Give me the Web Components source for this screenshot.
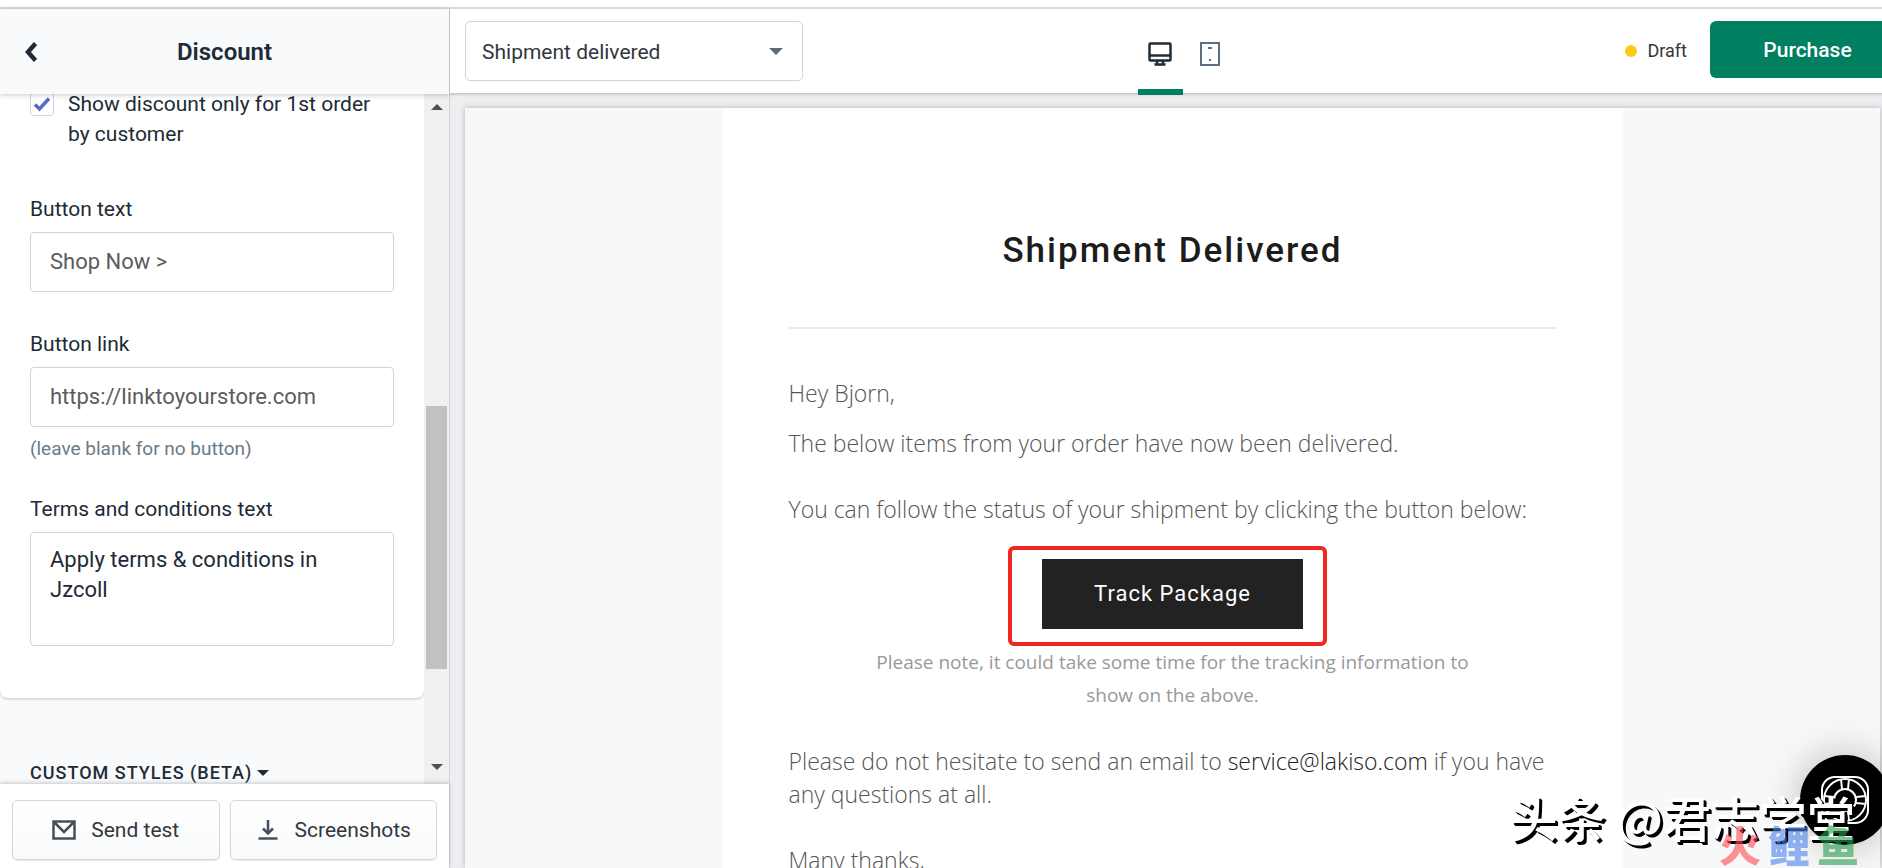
<!DOCTYPE html>
<html lang="en">
<head>
<meta charset="utf-8">
<meta name="viewport" content="width=device-width, initial-scale=1">
<title>Discount</title>
<style>
    body {
        margin: 0;
        font-family: Roboto, "Noto Sans", sans-serif;
        font-size: 21px;
        line-height: 30px;
        color: #212b36;
        background-color: #ffffff;
        overflow: hidden;
    }
</style>
</head>
<body>

<email-editor>
    <side-panel slot="side" heading="Discount">
        <check-field checked>Show discount only for 1st order by customer</check-field>
        <text-field label="Button text" value="Shop Now &gt;"></text-field>
        <text-field label="Button link" value="https://linktoyourstore.com" help="(leave blank for no button)"></text-field>
        <text-field label="Terms and conditions text" value="Apply terms &amp; conditions in Jzcoll" multiline></text-field>
        <section-toggle slot="after">CUSTOM STYLES (BETA)</section-toggle>
        <action-button slot="actions" icon="mail">Send test</action-button>
        <action-button slot="actions" icon="download">Screenshots</action-button>
    </side-panel>
    <tool-bar slot="bar" template="Shipment delivered" status="Draft">Purchase</tool-bar>
    <email-preview slot="preview" heading="Shipment Delivered">
        <p>Hey Bjorn,</p>
        <p>The below items from your order have now been delivered.</p>
        <track-button slot="action">Track Package</track-button>
    </email-preview>
</email-editor>

<chat-launcher></chat-launcher>
<page-watermark></page-watermark>

<script>
'use strict';

class EmailEditor extends HTMLElement {

    constructor() {
        super();
        this._root = this.attachShadow({ mode: 'open' });
        this._root.innerHTML = `
            <style>
                :host {
                    display: flex;
                    flex-direction: column;
                    height: 100vh;
                }

                .strip {
                    flex: none;
                    height: 7px;
                    border-bottom: 2px solid #d9dadd;
                }

                .columns {
                    flex: 1;
                    min-height: 0;
                    display: grid;
                    grid-template-columns: 449px minmax(0, 1fr);
                }

                main {
                    display: flex;
                    flex-direction: column;
                    min-width: 0;
                    min-height: 0;
                    border-left: 1px solid #d3d5d8;
                    background-color: #eeeef1;
                    overflow: hidden;
                }
            </style>
            <div class="strip"></div>
            <div class="columns">
                <slot name="side"></slot>
                <main>
                    <slot name="bar"></slot>
                    <slot name="preview"></slot>
                </main>
            </div>`;
    }
}

customElements.define('email-editor', EmailEditor);


class SidePanel extends HTMLElement {

    constructor() {
        super();
        this._root = this.attachShadow({ mode: 'open' });
        this._root.innerHTML = `
            <style>
                ${ this._css() }
            </style>
            <header>
                <button class="back" aria-label="Back">
                    <svg width="14" height="22" viewBox="0 0 14 22"><path d="M11.500 2.500 4 11l7.500 8.500" fill="none" stroke="#212b36" stroke-width="4.500"/></svg>
                </button>
                <h1></h1>
            </header>
            <div class="body">
                <div class="scroller">
                    <div class="card"><slot></slot></div>
                    <slot name="after"></slot>
                </div>
                <div class="bar" aria-hidden="true">
                    <svg width="12" height="6" viewBox="0 0 12 6"><path d="M0 6 6 0l6 6z" fill="#505050"/></svg>
                    <div class="thumb"></div>
                    <svg class="down" width="12" height="6" viewBox="0 0 12 6"><path d="M0 0l6 6 6-6z" fill="#505050"/></svg>
                </div>
            </div>
            <footer><slot name="actions"></slot></footer>`;

        this._root.querySelector('h1').textContent = this.getAttribute('heading');
        this._scroller = this._root.querySelector('.scroller');
    }

    connectedCallback() {
        requestAnimationFrame(() => this._scroller.scrollTop = 37);
    }

    _css() {
        return `
            :host {
                display: flex;
                flex-direction: column;
                min-height: 0;
                background-color: #f9fafb;
            }

            header {
                position: relative;
                z-index: 1;
                flex: none;
                display: grid;
                grid-template-columns: 1fr auto 1fr;
                align-items: center;
                height: 85px;
                background-color: #f9fafc;
                box-shadow: 0 1px 5px rgba(33, 43, 54, 0.25);
            }

            h1 {
                margin: 0;
                font-size: 24px;
                font-weight: 600;
            }

            .back {
                justify-self: start;
                display: flex;
                margin: 0 24px;
                padding: 0;
                border: none;
                background: none;
            }

            .body {
                flex: 1;
                min-height: 0;
                display: flex;
            }

            .scroller {
                flex: 1;
                min-width: 0;
                overflow-y: auto;
                scrollbar-width: none;
            }

            .card {
                display: flex;
                flex-direction: column;
                gap: 37px;
                padding: 32px 30px 52px;
                border-radius: 0 0 8px 8px;
                background-color: #ffffff;
                box-shadow: 0 1px 3px rgba(33, 43, 54, 0.25);
            }

            .bar {
                flex: none;
                display: grid;
                grid-template-rows: 25px 287fr 263fr 85fr 25px;
                justify-items: center;
                align-items: center;
                width: 25px;
                padding-bottom: 5px;
                background-color: #f0f0f0;
            }

            .thumb {
                grid-row: 3;
                align-self: stretch;
                width: 21px;
                background-color: #c1c1c1;
            }

            .down {
                grid-row: 5;
            }

            footer {
                position: relative;
                flex: none;
                display: grid;
                grid-template-columns: 1fr 1fr;
                gap: 10px;
                padding: 16px 12px 8px;
                background-color: #ffffff;
                box-shadow: 0 -1px 4px rgba(33, 43, 54, 0.25);
            }
        `;
    }
}

customElements.define('side-panel', SidePanel);


class CheckField extends HTMLElement {

    constructor() {
        super();
        this._root = this.attachShadow({ mode: 'open' });
        this._root.innerHTML = `
            <style>
                :host {
                    display: block;
                    margin-bottom: 8px;
                }

                label {
                    display: flex;
                    gap: 14px;
                }

                .box {
                    flex: none;
                    display: grid;
                    width: 24px;
                    height: 24px;
                    margin-top: 3px;
                }

                input, svg {
                    grid-area: 1 / 1;
                    place-self: center;
                }

                input {
                    appearance: none;
                    width: 24px;
                    height: 24px;
                    margin: 0;
                    border: 1px solid #cfd3da;
                    border-radius: 4px;
                    background-color: #ffffff;
                }

                svg {
                    display: none;
                    pointer-events: none;
                }

                input:checked + svg {
                    display: block;
                }
            </style>
            <label>
                <span class="box">
                    <input type="checkbox">
                    <svg width="18" height="16" viewBox="0 0 18 16"><path d="M2 8.500 6.500 13 16 2.500" fill="none" stroke="#5c6ac4" stroke-width="3.500"/></svg>
                </span>
                <span><slot></slot></span>
            </label>`;
        this._root.querySelector('input').checked = this.hasAttribute('checked');
    }
}

customElements.define('check-field', CheckField);


class TextField extends HTMLElement {

    constructor() {
        super();
        this._root = this.attachShadow({ mode: 'open' });

        let multiline = this.hasAttribute('multiline');

        this._root.innerHTML = `
            <style>
                ${ this._css() }
            </style>
            <label for="control"></label>
            ${ multiline ? '<textarea id="control"></textarea>' : '<input id="control" type="text">' }
            ${ this.hasAttribute('help') ? '<div class="help"></div>' : '' }`;

        this._root.querySelector('label').textContent = this.getAttribute('label');
        this._root.querySelector('#control').value = this.getAttribute('value');
        if (this.hasAttribute('help'))
            this._root.querySelector('.help').textContent = this.getAttribute('help');
    }

    _css() {
        return `
            :host {
                display: block;
            }

            label {
                display: block;
                margin-bottom: 8px;
            }

            input, textarea {
                display: block;
                box-sizing: border-box;
                width: 100%;
                margin: 0;
                border: 1px solid #d1d3d6;
                border-radius: 4px;
                background-color: #ffffff;
                font-family: inherit;
                font-size: 22px;
                line-height: 30px;
            }

            input {
                height: 60px;
                padding: 0 19px 2px;
                color: #5c5c5c;
            }

            textarea {
                height: 114px;
                padding: 12px 19px;
                color: #212b36;
                resize: none;
            }

            .help {
                margin-top: 14px;
                font-size: 19px;
                line-height: 16px;
                color: #6b7a87;
            }
        `;
    }
}

customElements.define('text-field', TextField);


class SectionToggle extends HTMLElement {

    constructor() {
        super();
        this._root = this.attachShadow({ mode: 'open' });
        this._root.innerHTML = `
            <style>
                :host {
                    display: block;
                    padding: 60px 30px;
                }

                button {
                    display: flex;
                    align-items: center;
                    gap: 5px;
                    padding: 0;
                    border: none;
                    background: none;
                    font-family: inherit;
                    font-size: 18px;
                    font-weight: 500;
                    line-height: 30px;
                    letter-spacing: 1px;
                    color: #212b36;
                }
            </style>
            <button><slot></slot><svg width="12" height="6" viewBox="0 0 12 6"><path d="M0 0h12L6 6z" fill="#212b36"/></svg></button>`;
    }
}

customElements.define('section-toggle', SectionToggle);


class ActionButton extends HTMLElement {

    constructor() {
        super();
        this._root = this.attachShadow({ mode: 'open' });

        let icons = {
            mail: '<path d="M1.500 3.500h21v17h-21z"/><path d="M2 4l10 10L22 4"/>',
            download: '<path d="M12 2v13"/><path d="M7 10.500l5 5 5-5"/><path d="M2.500 20.500h19"/>'
        };

        this._root.innerHTML = `
            <style>
                :host {
                    display: block;
                }

                button {
                    display: flex;
                    align-items: center;
                    justify-content: center;
                    gap: 15px;
                    width: 100%;
                    height: 60px;
                    padding: 0;
                    border: 1px solid #d3d6da;
                    border-radius: 5px;
                    background: linear-gradient(#ffffff, #f9fafb);
                    box-shadow: 0 1px 1px rgba(33, 43, 54, 0.08);
                    font-family: inherit;
                    font-size: 21px;
                    color: #31373d;
                }

                svg {
                    fill: none;
                    stroke: #454f5b;
                    stroke-width: 2.5;
                }
            </style>
            <button><svg width="24" height="24" viewBox="0 0 24 24">${ icons[this.getAttribute('icon')] }</svg><slot></slot></button>`;
    }
}

customElements.define('action-button', ActionButton);


class ToolBar extends HTMLElement {

    constructor() {
        super();
        this._root = this.attachShadow({ mode: 'open' });
        this._root.innerHTML = `
            <style>
                ${ this._css() }
            </style>
            <div class="select">
                <select aria-label="Email template"><option></option></select>
                <svg width="14" height="7" viewBox="0 0 14 7"><path d="M0 0h14L7 7z" fill="#5b6b7b"/></svg>
            </div>
            <div class="devices">
                <button class="active" aria-label="Desktop">
                    <svg width="24" height="24" viewBox="0 0 24 24" fill="none" stroke="#212b36" stroke-width="2.500"><rect x="1.500" y="1.500" width="21" height="17" rx="1"/><path d="M2 13.500h20M9 19v4M15 19v4M6.500 22.500h11"/></svg>
                </button>
                <button aria-label="Mobile">
                    <svg width="24" height="24" viewBox="0 0 24 24" fill="none" stroke="#5f6f80" stroke-width="2"><rect x="3" y="1" width="18" height="22"/><path d="M10 6h4M11 18h2"/></svg>
                </button>
            </div>
            <div class="end">
                <span class="status"></span>
                <button class="purchase"><slot></slot></button>
            </div>`;
        this._root.querySelector('option').textContent = this.getAttribute('template');
        this._root.querySelector('.status').textContent = this.getAttribute('status');
    }

    _css() {
        return `
            :host {
                position: relative;
                z-index: 1;
                flex: none;
                box-sizing: border-box;
                display: grid;
                grid-template-columns: 1fr auto 1fr;
                align-items: start;
                width: calc(100% + 38px);
                height: 84px;
                padding: 12px 15px 0;
                background-color: #ffffff;
                box-shadow: 0 1px 3px rgba(33, 43, 54, 0.3);
            }

            .select {
                display: grid;
                align-items: center;
                width: 338px;
            }

            select, .select svg {
                grid-area: 1 / 1;
            }

            .select svg {
                justify-self: end;
                margin-right: 20px;
                pointer-events: none;
            }

            select {
                appearance: none;
                width: 100%;
                height: 60px;
                padding: 2px 16px 0;
                border: 1px solid #d1d3d6;
                border-radius: 5px;
                background-color: #ffffff;
                font-family: inherit;
                font-size: 21px;
                color: #31373d;
            }

            .devices {
                display: flex;
                gap: 5px;
            }

            .devices button {
                display: flex;
                justify-content: center;
                width: 45px;
                height: 74px;
                padding: 21px 0 0;
                border: none;
                border-bottom: 6px solid transparent;
                background: none;
            }

            .devices .active {
                border-bottom-color: #008060;
            }

            .end {
                display: flex;
                justify-content: flex-end;
                align-items: center;
                gap: 23px;
            }

            .status {
                display: flex;
                align-items: center;
                gap: 11px;
                padding-top: 2px;
                font-size: 18px;
                color: #31373d;
            }

            .status::before {
                content: '';
                width: 12px;
                height: 12px;
                border-radius: 50%;
                background-color: #fccb14;
            }

            .purchase {
                width: 195px;
                height: 57px;
                border: none;
                border-radius: 6px;
                background-color: #008060;
                font-family: inherit;
                font-size: 21px;
                font-weight: 500;
                color: #ffffff;
            }
        `;
    }
}

customElements.define('tool-bar', ToolBar);


class EmailPreview extends HTMLElement {

    constructor() {
        super();
        this._root = this.attachShadow({ mode: 'open' });
        this._root.innerHTML = `
            <style>
                ${ this._css() }
            </style>
            <article>
                <h2></h2>
                <hr>
                <slot></slot>
                <p class="lead">You can follow the status of your shipment by clicking the button below:</p>
                <slot name="action"></slot>
                <p class="note">Please note, it could take some time for the tracking information to show on the above.</p>
                <p class="lead">Please do not hesitate to send an email to <a href="mailto:service@lakiso.com">service@lakiso.com</a> if you have any questions at all.</p>
                <p class="lead">Many thanks,</p>
            </article>`;
        this._root.querySelector('h2').textContent = this.getAttribute('heading');
    }

    _css() {
        return `
            :host {
                flex: 1;
                min-height: 0;
                display: block;
                margin: 15px 2px 0 15px;
                background-color: #f8f8f8;
                box-shadow: 0 0 5px rgba(33, 43, 54, 0.3);
                overflow: hidden;
                font-family: "Open Sans", "Noto Sans", sans-serif;
                font-size: 23px;
                font-weight: 300;
                line-height: 33px;
                color: #555555;
            }

            article {
                box-sizing: border-box;
                max-width: 900px;
                min-height: 100%;
                margin: 0 auto;
                padding: 122px 66px 33px;
                background-color: #ffffff;
            }

            h2 {
                margin: 0;
                font-family: Roboto, sans-serif;
                font-size: 35px;
                font-weight: 500;
                line-height: 42px;
                letter-spacing: 2px;
                text-align: center;
                color: #1c1c1c;
            }

            hr {
                margin: 55px 0 48px;
                border: none;
                border-top: 2px solid #ebebeb;
            }

            p, ::slotted(p) {
                margin: 0 0 17px;
            }

            .lead {
                margin: 33px 0;
            }

            .note {
                width: 630px;
                max-width: 100%;
                margin: 17px auto 33px;
                font-size: 19px;
                font-weight: 400;
                text-align: center;
                color: #999999;
            }

            a {
                color: #222222;
                text-decoration: none;
            }
        `;
    }
}

customElements.define('email-preview', EmailPreview);


class TrackButton extends HTMLElement {

    constructor() {
        super();
        this._root = this.attachShadow({ mode: 'open' });
        this._root.innerHTML = `
            <style>
                :host {
                    display: flex;
                    justify-content: center;
                }

                .wrap {
                    position: relative;
                }

                .wrap::after {
                    content: '';
                    position: absolute;
                    inset: -13px -24px -17px -34px;
                    border: 4px solid #f0261f;
                    border-radius: 6px;
                    pointer-events: none;
                }

                a {
                    display: block;
                    min-width: 157px;
                    padding: 20px 52px;
                    background-color: #222222;
                    font-family: Roboto, sans-serif;
                    font-size: 22px;
                    font-weight: 400;
                    line-height: 30px;
                    letter-spacing: 1px;
                    text-align: center;
                    text-decoration: none;
                    color: #ffffff;
                }
            </style>
            <div class="wrap"><a href="#"><slot></slot></a></div>`;
    }
}

customElements.define('track-button', TrackButton);


class ChatLauncher extends HTMLElement {

    constructor() {
        super();
        this._root = this.attachShadow({ mode: 'open' });
        this._root.innerHTML = `
            <style>
                :host {
                    position: fixed;
                    right: -8px;
                    bottom: 23px;
                    z-index: 2;
                }

                button {
                    display: flex;
                    align-items: center;
                    justify-content: center;
                    width: 90px;
                    height: 90px;
                    padding: 0;
                    border: none;
                    border-radius: 50%;
                    background-color: #000000;
                    box-shadow: 0 0 40px rgba(0, 0, 0, 0.25);
                }
            </style>
            <button aria-label="Help">
                <svg width="48" height="48" viewBox="0 0 48 48" fill="none" stroke="#ffffff" stroke-width="2">
                    <rect x="1" y="1" width="46" height="46" rx="13"/>
                    <circle cx="24" cy="24" r="21"/>
                    <circle cx="24" cy="24" r="11"/>
                    <path d="M20 3l1 10M28 3l-1 10M20 45l1-10M28 45l-1-10M3 20l10 1M3 28l10-1M45 20l-10 1M45 28l-10-1"/>
                </svg>
            </button>`;
    }
}

customElements.define('chat-launcher', ChatLauncher);


class PageWatermark extends HTMLElement {

    constructor() {
        super();
        this._root = this.attachShadow({ mode: 'open' });
        this._root.innerHTML = `
            <style>
                :host {
                    position: fixed;
                    right: 23px;
                    bottom: 0;
                    z-index: 3;
                    display: grid;
                    justify-items: end;
                    font-family: "Noto Sans CJK SC", sans-serif;
                    white-space: nowrap;
                    pointer-events: none;
                }

                .handle {
                    margin-right: 4px;
                    font-size: 48px;
                    font-weight: 500;
                    line-height: 52px;
                    color: #ffffff;
                    text-shadow: 2px 2px 0 #000000, 3px 3px 0 #000000;
                }

                .name {
                    display: flex;
                    gap: 7px;
                    margin-top: -20px;
                    padding-bottom: 2px;
                    font-size: 42px;
                    font-weight: 900;
                    line-height: 44px;
                    opacity: 0.6;
                }

                .red { color: #ff4a50; }
                .blue { color: #4a80f0; }
                .green { color: #28a050; }
            </style>
            <div class="handle">头条 @君志学堂</div>
            <div class="name"><span class="red">火</span><span class="blue">鲤</span><span class="green">鱼</span></div>`;
    }
}

customElements.define('page-watermark', PageWatermark);
</script>

</body>
</html>
